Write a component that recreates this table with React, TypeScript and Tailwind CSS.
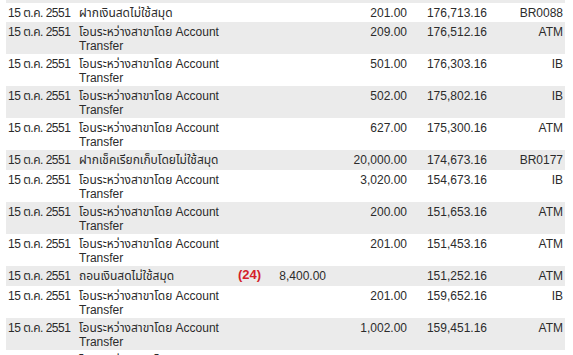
import React from "react";

type Row = {
  desc: string;
  desc2?: string;
  withdraw?: string;
  deposit?: string;
  balance?: string;
  channel?: string;
  note?: string;
};

const TRANSFER = "โอนระหว่างสาขาโดย Account";

const rows: Row[] = [
  { desc: "ฝากเงินสดไม่ใช้สมุด", deposit: "201.00", balance: "176,713.16", channel: "BR0088" },
  { desc: TRANSFER, desc2: "Transfer", deposit: "209.00", balance: "176,512.16", channel: "ATM" },
  { desc: TRANSFER, desc2: "Transfer", deposit: "501.00", balance: "176,303.16", channel: "IB" },
  { desc: TRANSFER, desc2: "Transfer", deposit: "502.00", balance: "175,802.16", channel: "IB" },
  { desc: TRANSFER, desc2: "Transfer", deposit: "627.00", balance: "175,300.16", channel: "ATM" },
  { desc: "ฝากเช็คเรียกเก็บโดยไม่ใช้สมุด", deposit: "20,000.00", balance: "174,673.16", channel: "BR0177" },
  { desc: TRANSFER, desc2: "Transfer", deposit: "3,020.00", balance: "154,673.16", channel: "IB" },
  { desc: TRANSFER, desc2: "Transfer", deposit: "200.00", balance: "151,653.16", channel: "ATM" },
  { desc: TRANSFER, desc2: "Transfer", deposit: "201.00", balance: "151,453.16", channel: "ATM" },
  { desc: "ถอนเงินสดไม่ใช้สมุด", note: "(24)", withdraw: "8,400.00", balance: "151,252.16", channel: "ATM" },
  { desc: TRANSFER, desc2: "Transfer", deposit: "201.00", balance: "159,652.16", channel: "IB" },
  { desc: TRANSFER, desc2: "Transfer", deposit: "1,002.00", balance: "159,451.16", channel: "ATM" },
  { desc: TRANSFER, desc2: "Transfer" },
];

export default function App() {
  return (
    <div
      className="w-[573px] h-[355px] overflow-hidden bg-white pl-[6px] pr-[8px] text-[12px] leading-[14px] text-[#2b2b2b]"
      style={{ fontFamily: '"Liberation Sans", "Noto Sans Thai", "Noto Sans", sans-serif' }}
    >
      <div className="h-[3px] bg-[#ebebeb]" />
      {rows.map((row, i) => (
        <div
          key={i}
          className={`relative flex pt-[3px] ${row.desc2 ? "h-[32px]" : i === 0 ? "h-[19px]" : "h-[20px]"} ${
            i % 2 === 1 ? "bg-[#ebebeb]" : "bg-white"
          }`}
        >
          <div className="w-[73px] shrink-0 pl-[2px] whitespace-nowrap tracking-[-0.5px]">15 ต.ค. 2551</div>
          <div className="w-[175px] shrink-0 whitespace-nowrap">
            <div>{row.desc}</div>
            {row.desc2 && <div>{row.desc2}</div>}
          </div>
          <div className="w-[72px] shrink-0 text-right">{row.withdraw}</div>
          <div className="w-[81px] shrink-0 text-right">{row.deposit}</div>
          <div className="w-[80px] shrink-0 text-right">{row.balance}</div>
          <div className="w-[76px] shrink-0 text-right">{row.channel}</div>
          {row.note && (
            <span className="absolute left-[232px] top-[2px] text-[13px] font-bold text-[#d4202a]">
              {row.note}
            </span>
          )}
        </div>
      ))}
    </div>
  );
}
